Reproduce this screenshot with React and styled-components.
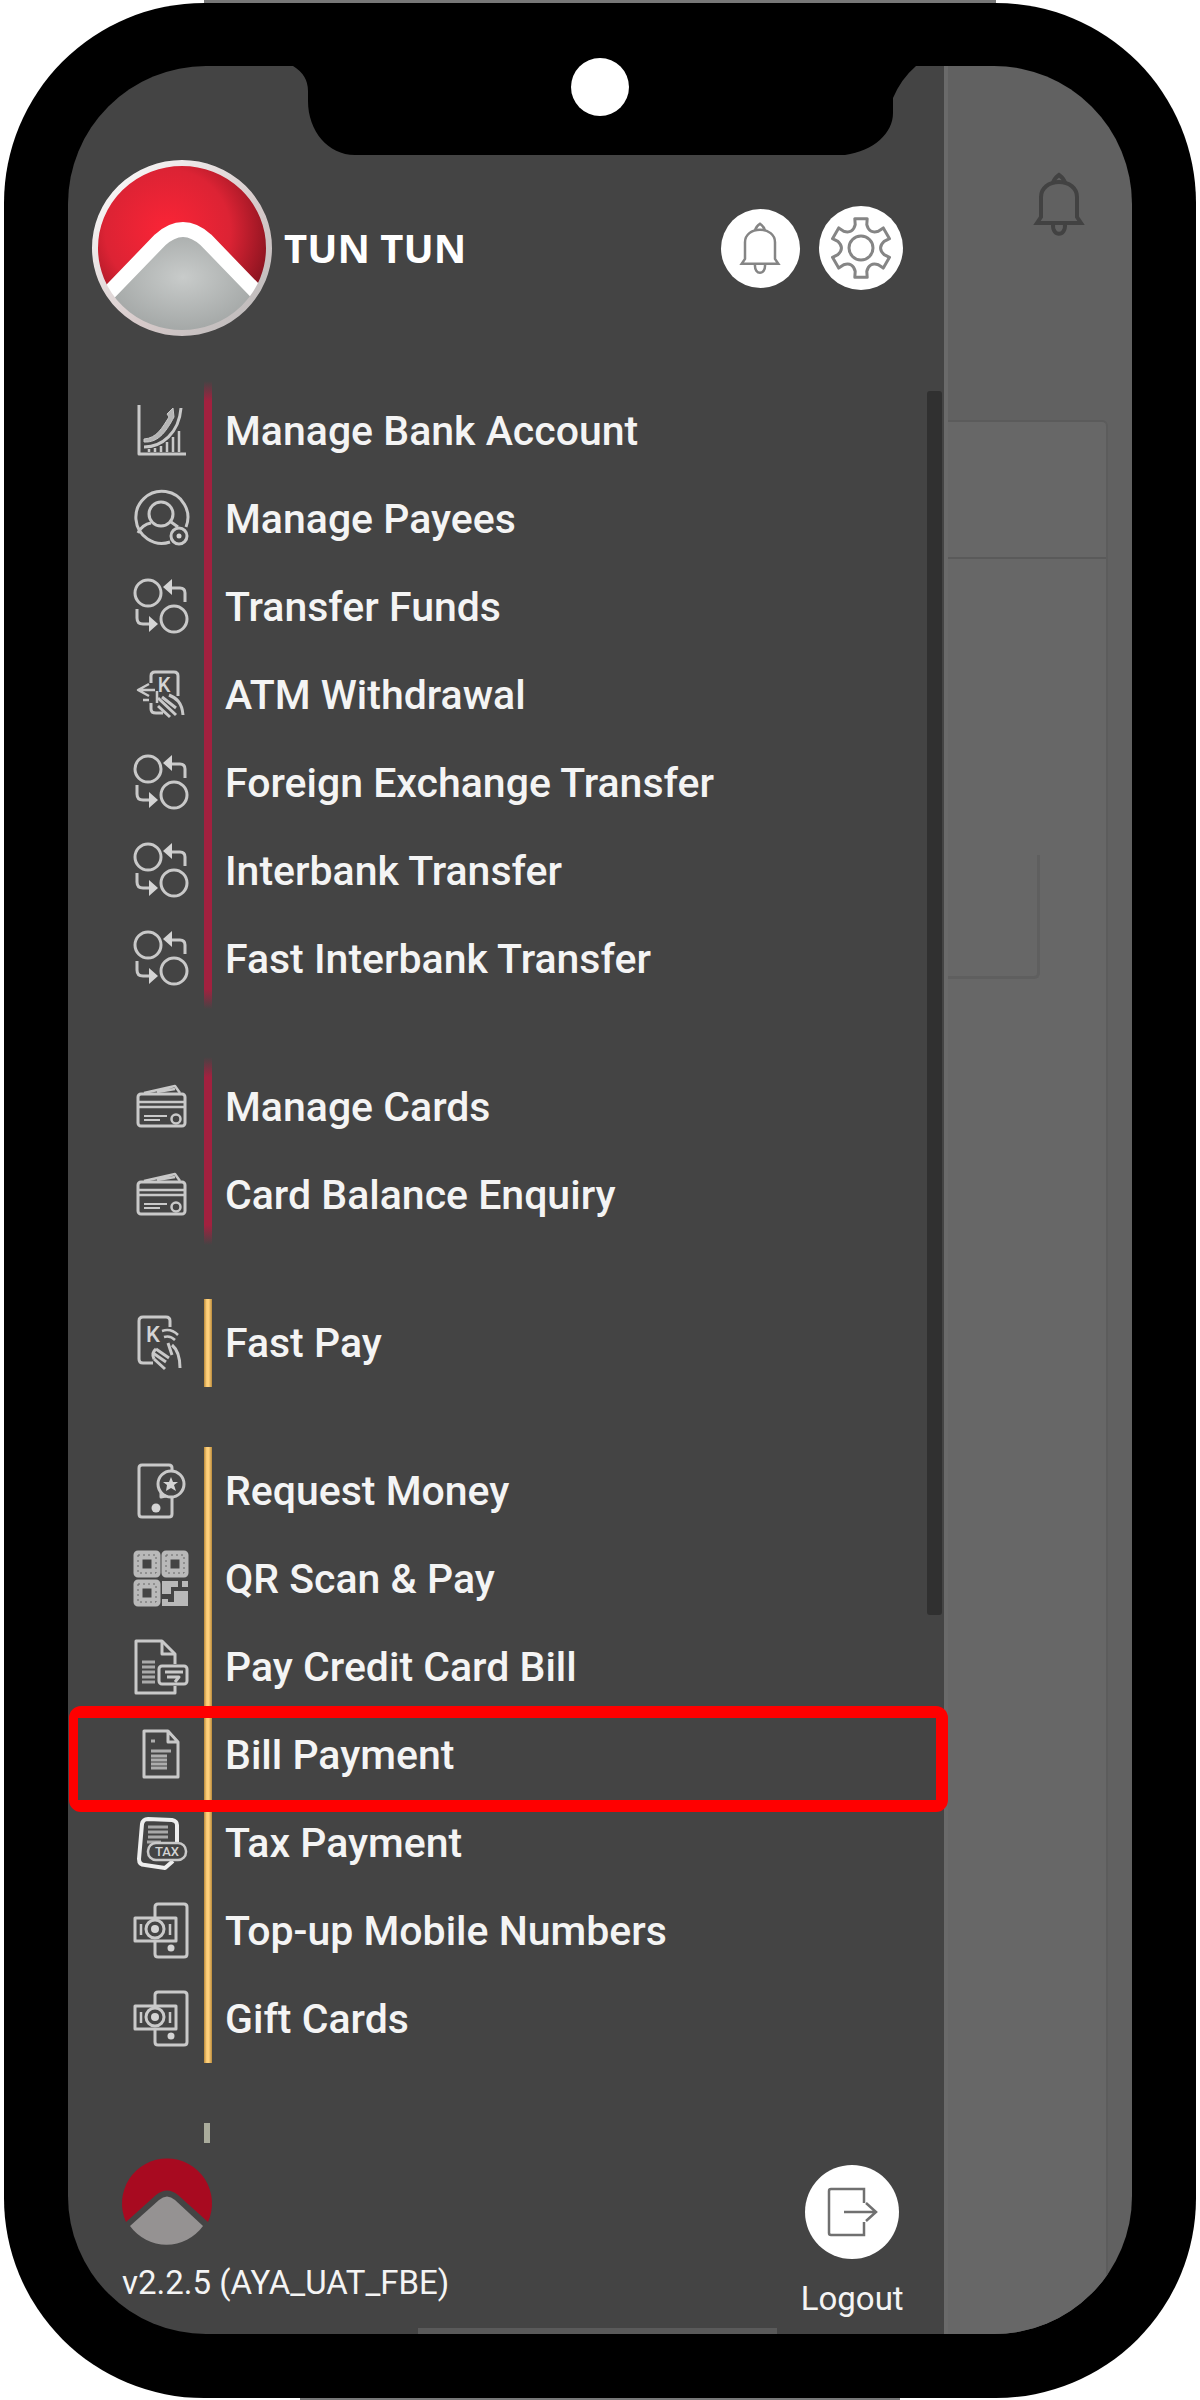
import React from "react";
import styled, { createGlobalStyle, css } from "styled-components";

const GlobalStyle = createGlobalStyle`
  * { box-sizing: border-box; }
  body { margin: 0; background: #fff; }
  button { font: inherit; color: inherit; border: 0; padding: 0; background: none; cursor: pointer; }
  svg { display: block; flex: none; overflow: visible; }
`;

const Stage = styled.div`
  padding: 3px 4px;
  font-family: Roboto, "Liberation Sans", sans-serif;
  color: #f4f4f4;
  background:
    linear-gradient(#777, #777) top / 66% 3px no-repeat,
    linear-gradient(#777, #777) bottom / 50% 3px no-repeat,
    #fff;
`;

const Phone = styled.div`
  position: relative;
  padding: 63px 64px 64px;
  border-radius: 200px;
  background: #000;
`;

const Notch = styled.svg`
  position: absolute;
  top: 52px;
  left: 50%;
  margin-left: -312px;
  z-index: 2;
`;

const Screen = styled.div`
  display: flex;
  border-radius: 138px;
  overflow: hidden;
`;

const Drawer = styled.aside`
  position: relative;
  z-index: 1;
  flex: none;
  width: 82.3%;
  background: #444;
`;

const Header = styled.header`
  display: flex;
  align-items: center;
  padding: 93px 41px 0 24px;
  height: 271px;
`;

const Name = styled.h1`
  margin: 0 auto 0 12px;
  font: 700 40px/56px "Open Sans", "Noto Sans", sans-serif;
  color: #fff;
`;

const RoundButton = styled.button`
  display: grid;
  place-items: center;
  width: ${(p) => p.$size}px;
  height: ${(p) => p.$size}px;
  border-radius: 50%;
  background: #fff;
  color: #858585;
`;

const Actions = styled.div`
  display: flex;
  align-items: center;
  gap: 19px;
`;

const Nav = styled.nav`
  position: relative;
  display: flex;
  flex-direction: column;
  gap: 48px;
  padding-top: 44px;
`;

const ScrollThumb = styled.div`
  position: absolute;
  top: 54px;
  right: 2px;
  width: 15px;
  height: 1224px;
  border-radius: 3px;
  background: #303030;
`;

const bars = {
  red: "linear-gradient(transparent, #a2213f 20px, #a2213f calc(100% - 20px), transparent)",
  gold: "linear-gradient(90deg, #b98a3c, #ffd07a 35%, #ffd07a 60%, #b98a3c)",
  faded: "linear-gradient(#aaac9c, #aaac9c)",
};

const Group = styled.ul`
  list-style: none;
  margin: 0;
  padding: 6px 0;
  min-height: 32px;
  background: ${(p) => bars[p.$bar]} 136px 0 / ${(p) => (p.$bar === "faded" ? 6 : 8)}px 100% no-repeat;
  ${(p) =>
    p.$bar !== "red" &&
    css`
      background-origin: content-box;
      background-clip: content-box;
    `}
`;

const Item = styled.li`
  position: relative;
  ${(p) =>
    p.$marked &&
    css`
      &::after {
        content: "";
        position: absolute;
        inset: -5px -4px -13px 1px;
        border: 12px solid #f00;
        border-left-width: 9px;
        border-radius: 12px;
        pointer-events: none;
      }
    `}
`;

const ItemLink = styled.a`
  display: flex;
  align-items: center;
  gap: 36px;
  height: 88px;
  padding-left: 65px;
  font-size: 41px;
  font-weight: 500;
  line-height: 48px;
  color: inherit;
  text-decoration: none;
`;

const Footer = styled.footer`
  display: flex;
  justify-content: space-between;
  align-items: flex-start;
  padding: 8px 40px 0 54px;
  height: 185px;
  font-size: 33px;
  line-height: 40px;
`;

const Brand = styled.div`
  display: flex;
  flex-direction: column;
  gap: 16px;
`;

const Logout = styled.button`
  display: flex;
  flex-direction: column;
  align-items: center;
  gap: 20px;
  padding-top: 8px;
`;

const LogoutDisc = styled.span`
  display: grid;
  place-items: center;
  width: 94px;
  height: 94px;
  border-radius: 50%;
  background: #fff;
  color: #707070;
`;

const HomeBar = styled.div`
  position: absolute;
  left: 40%;
  right: 19%;
  bottom: 0;
  height: 6px;
  background: #5a5a5a;
`;

const Behind = styled.div`
  flex: 1;
  min-width: 0;
  display: flex;
  flex-direction: column;
  background: #616161;
  border-left: 4px solid #6a6a6a;
`;

const BehindHeader = styled.div`
  display: flex;
  justify-content: flex-end;
  align-items: flex-start;
  height: 354px;
  padding: 107px 49px 0 0;
  color: #424242;
`;

const Sheet = styled.div`
  flex: 1;
  margin-right: 24px;
  border-top: 2px solid #5b5b5b;
  border-right: 2px solid #5c5c5c;
  border-radius: 0 6px 0 0;
  background: #676767;
`;

const SheetTitle = styled.div`
  height: 137px;
  border-bottom: 2px solid #5a5a5a;
`;

const SheetBox = styled.div`
  height: 124px;
  margin: 296px 66px 0 0;
  border: solid #5f5f5f;
  border-width: 0 3px 3px 0;
  border-radius: 0 0 6px 0;
`;

function Bell({ width, height, stroke }) {
  return (
    <svg width={width} height={height} viewBox="0 0 48 62" fill="none" stroke="currentColor" strokeWidth={stroke}>
      <path d="M6 24v20l-4 6h44l-4-6V24C42 15 34 9 24 9S6 15 6 24Z" />
      <path d="M18 10c1-4 3-6 6-8 3 2 5 4 6 8" />
      <path d="M18 51c-1 13 13 13 12 0" />
    </svg>
  );
}

function gearPath() {
  const at = (r, deg) => {
    const a = (deg * Math.PI) / 180;
    return `${(r * Math.sin(a)).toFixed(1)} ${(-r * Math.cos(a)).toFixed(1)}`;
  };
  let d = "";
  for (let a = 0; a < 360; a += 60) {
    d += `${a ? "L" : "M"}${at(30, a - 12)} L${at(30, a + 12)} L${at(24, a + 14)} Q${at(16, a + 30)} ${at(24, a + 46)} `;
  }
  return `${d}Z`;
}

function Gear() {
  return (
    <svg width="64" height="64" viewBox="-32 -32 64 64" fill="none" stroke="currentColor" strokeWidth="3" strokeLinejoin="round">
      <path d={gearPath()} />
      <circle r="12" />
    </svg>
  );
}

function Avatar() {
  return (
    <svg width="180" height="176" viewBox="0 0 180 176">
      <defs>
        <radialGradient id="avRed" cx="0.42" cy="0.4" r="0.58">
          <stop offset="0" stopColor="#fb2436" />
          <stop offset="0.6" stopColor="#dc2334" />
          <stop offset="1" stopColor="#8c1420" />
        </radialGradient>
        <radialGradient id="avGrey" cx="0.5" cy="0.45" r="0.6">
          <stop offset="0" stopColor="#c8cbca" />
          <stop offset="1" stopColor="#9da1a0" />
        </radialGradient>
        <linearGradient id="avRim" x1="0" y1="0" x2="1" y2="1">
          <stop offset="0" stopColor="#fff" />
          <stop offset="0.6" stopColor="#d6c9c9" />
          <stop offset="1" stopColor="#b8b8b8" />
        </linearGradient>
        <clipPath id="avClip">
          <ellipse cx="90" cy="88" rx="87" ry="85" />
        </clipPath>
      </defs>
      <g clipPath="url(#avClip)">
        <rect width="180" height="176" fill="url(#avRed)" />
        <path d="M12 138 L70 78 Q91 60 112 78 L170 138 V176 H12Z" fill="url(#avGrey)" />
        <path d="M8 142 L68 80 Q91 59 114 80 L174 142" fill="none" stroke="#fff" strokeWidth="15" />
      </g>
      <ellipse cx="90" cy="88" rx="87" ry="85" fill="none" stroke="url(#avRim)" strokeWidth="6" />
    </svg>
  );
}

function SmallLogo() {
  return (
    <svg width="90" height="90" viewBox="0 0 90 90">
      <path d="M4 65A45 45 0 1 1 86 65L56 38Q45 29 34 38Z" fill="#a80a20" />
      <path d="M8 69L37 43Q45 36 53 43L81 69A45 45 0 0 1 8 69Z" fill="#959292" />
    </svg>
  );
}

const Icon = ({ children }) => (
  <svg width="56" height="56" viewBox="0 0 56 56" fill="none" stroke="#c9c9c9" strokeWidth="3" strokeLinejoin="round">
    {children}
  </svg>
);

const solid = { fill: "#d4d4d4", stroke: "none" };
const glyph = { fill: "#d4d4d4", stroke: "none", fontFamily: "Roboto, sans-serif", fontWeight: 500, textAnchor: "middle" };

const icons = {
  chart: (
    <Icon>
      <path d="M6 2v49h47" />
      <path d="M11 36c13-1 18-11 25-22l-2-3 6-6 1 9c-7 13-15 26-30 25Z" fill="#b5b5b5" strokeWidth="1" />
      <path d="M11 44C29 44 46 30 48 5" />
      <path d="M28 49v-6M34 49V39M40 49V34M46 49V28M16 49v-3M22 49v-4" strokeWidth="2.5" />
    </Icon>
  ),
  payee: (
    <Icon>
      <path d="M37 51A26 26 0 1 1 53 36" />
      <circle cx="28" cy="23" r="12" />
      <path d="M5 42c3-6 7-9 13-10M38 31l7 5" />
      <circle cx="46" cy="45" r="8" />
      <circle cx="46" cy="45" r="2.5" {...solid} />
    </Icon>
  ),
  transfer: (
    <Icon>
      <circle cx="15" cy="14" r="13" />
      <circle cx="41" cy="40" r="13" />
      <path d="M37 9h10q5 0 5 5v9M4 30v9q0 6 6 6h8" />
      <path d="M30 8l9-8v16ZM25 45l-9-8v16Z" {...solid} />
    </Icon>
  ),
  atm: (
    <Icon>
      <path d="M18 16V9q0-4 4-4h19q4 0 4 4v20M18 36v6q0 4 5 4h7" />
      <text x="31" y="25" fontSize="20" {...glyph}>K</text>
      <path d="M16 17L5 23l11 6M6 23h16M16 33h-6M24 24v12" strokeWidth="2.5" />
      <path d="M25 31l18 17M29 30l14 11M36 28c7 3 13 7 14 20M25 39l12 11" strokeWidth="3" />
    </Icon>
  ),
  card: (
    <Icon>
      <rect x="5" y="15" width="47" height="32" rx="3" />
      <path d="M5 23h47M5 28h47" strokeWidth="2.5" />
      <path d="M11 14l31-7 5 7M24 13l18-3" strokeWidth="2.5" />
      <path d="M11 37h23M11 41h16" strokeWidth="2" />
      <circle cx="43" cy="40" r="4.5" strokeWidth="2.5" />
    </Icon>
  ),
  fastPay: (
    <Icon>
      <path d="M37 12V6q0-4-4-4H10Q6 2 6 6v38q0 4 4 4h10" />
      <text x="20" y="27" fontSize="22" {...glyph}>K</text>
      <path d="M29 16q9-3 16 4M31 22q6-2 11 3" strokeWidth="2.5" />
      <path d="M35 28l4 12M39 30c6 5 8 12 8 23M23 34l13 9M20 38l13 9M21 44l11 10" strokeWidth="3" />
      <path d="M23 34q-5 4-2 10" />
    </Icon>
  ),
  request: (
    <Icon>
      <path d="M39 8V5q0-3-3-3H9Q6 2 6 5v46q0 3 3 3h27q3 0 3-3V34" />
      <circle cx="38" cy="21" r="13" />
      <path d="M28 29v5l5-1" />
      <circle cx="23" cy="45" r="4.5" {...solid} />
      <path d="M38 14l2 5h5l-4 3 2 6-5-3-5 3 1-6-4-3h6Z" {...solid} />
    </Icon>
  ),
  qr: (
    <Icon>
      <g stroke="#b9b9b9" strokeWidth="9">
        <rect x="5" y="4" width="18" height="18" />
        <rect x="33" y="4" width="18" height="18" />
        <rect x="5" y="33" width="18" height="18" />
      </g>
      <g stroke="#666" strokeWidth="1" strokeDasharray="2 3">
        <rect x="5" y="4" width="18" height="18" />
        <rect x="33" y="4" width="18" height="18" />
        <rect x="5" y="33" width="18" height="18" />
      </g>
      <path d="M29 30h16v6h-7v7h-9ZM49 30h6v6h-6ZM41 40h14v15H29v-7h6v3h6Z" fill="#b9b9b9" stroke="none" />
    </Icon>
  ),
  creditBill: (
    <Icon>
      <path d="M42 25V15L29 2H3v52h39v-7" />
      <path d="M29 2v13h13" />
      <path d="M9 23h13M9 28h13M9 33h13M9 38h13M9 43h13" strokeWidth="3" stroke="#aaa" />
      <rect x="26" y="27" width="28" height="18" rx="3" />
      <path d="M32 33h18M34 38h12l-4 5" strokeWidth="3" />
    </Icon>
  ),
  bill: (
    <Icon>
      <path d="M11 4h24l10 11v35H11ZM35 4v11h10" />
      <path d="M18 14h4M18 24h20M18 29h16M18 33h16M18 37h16M18 41h16" strokeWidth="3" stroke="#adadad" />
    </Icon>
  ),
  tax: (
    <Icon>
      <path d="M44 27V10q0-4-5-5L15 4q-5 0-6 5L6 44q0 6 6 6l20 3 8-7" stroke="#eee" strokeWidth="4" />
      <path d="M15 12h20M15 17h20M15 22h20M14 27h14" strokeWidth="3" stroke="#a8a8a8" />
      <rect x="15" y="28" width="38" height="17" rx="8" fill="#444" strokeWidth="2.5" />
      <text x="34" y="41" fontSize="13" {...glyph}>TAX</text>
    </Icon>
  ),
  topup: (
    <Icon>
      <path d="M22 14V4q0-3 3-3h26q3 0 3 3v47q0 3-3 3H25q-3 0-3-3V39" />
      <rect x="2" y="15" width="41" height="23" />
      <path d="M8 21v11M37 21v11" strokeWidth="2.5" />
      <circle cx="22" cy="26" r="9" />
      <circle cx="22" cy="26" r="4" {...solid} />
      <circle cx="38" cy="45" r="3.5" {...solid} />
    </Icon>
  ),
};

const groups = [
  {
    bar: "red",
    items: [
      ["chart", "Manage Bank Account"],
      ["payee", "Manage Payees"],
      ["transfer", "Transfer Funds"],
      ["atm", "ATM Withdrawal"],
      ["transfer", "Foreign Exchange Transfer"],
      ["transfer", "Interbank Transfer"],
      ["transfer", "Fast Interbank Transfer"],
    ],
  },
  {
    bar: "red",
    items: [
      ["card", "Manage Cards"],
      ["card", "Card Balance Enquiry"],
    ],
  },
  { bar: "gold", items: [["fastPay", "Fast Pay"]] },
  {
    bar: "gold",
    items: [
      ["request", "Request Money"],
      ["qr", "QR Scan & Pay"],
      ["creditBill", "Pay Credit Card Bill"],
      ["bill", "Bill Payment", true],
      ["tax", "Tax Payment"],
      ["topup", "Top-up Mobile Numbers"],
      ["topup", "Gift Cards"],
    ],
  },
  { bar: "faded", items: [] },
];

export default function App() {
  return (
    <Stage>
      <GlobalStyle />
      <Phone>
        <Notch width="624" height="102" viewBox="0 0 624 102" aria-hidden="true">
          <path
            d="M0 0V11H5Q20 20 20 36V46C20 76 40 100 67 100H557C586 96 605 78 605 58V43Q613 24 628 11V0Z"
            fill="#000"
          />
          <circle cx="312" cy="32" r="29" fill="#fff" />
        </Notch>
        <Screen>
          <Drawer>
            <Header>
              <Avatar />
              <Name>TUN TUN</Name>
              <Actions>
                <RoundButton $size={79} aria-label="Notifications">
                  <Bell width={40} height={52} stroke={3} />
                </RoundButton>
                <RoundButton $size={84} aria-label="Settings">
                  <Gear />
                </RoundButton>
              </Actions>
            </Header>
            <Nav>
              <ScrollThumb />
              {groups.map((group, i) => (
                <Group key={i} $bar={group.bar}>
                  {group.items.map(([icon, label, marked]) => (
                    <Item key={label} $marked={marked}>
                      <ItemLink href="#">
                        {icons[icon]}
                        {label}
                      </ItemLink>
                    </Item>
                  ))}
                </Group>
              ))}
            </Nav>
            <Footer>
              <Brand>
                <SmallLogo />
                v2.2.5 (AYA_UAT_FBE)
              </Brand>
              <Logout>
                <LogoutDisc>
                  <svg width="50" height="50" viewBox="0 0 50 50" fill="none" stroke="currentColor" strokeWidth="2.5">
                    <path d="M37 16V2H4Q2 2 2 4v42q0 2 2 2h33V35" />
                    <path d="M17 25h31M39 16l10 9-10 9" />
                  </svg>
                </LogoutDisc>
                Logout
              </Logout>
            </Footer>
            <HomeBar />
          </Drawer>
          <Behind>
            <BehindHeader>
              <Bell width={48} height={62} stroke={4} />
            </BehindHeader>
            <Sheet>
              <SheetTitle />
              <SheetBox />
            </Sheet>
          </Behind>
        </Screen>
      </Phone>
    </Stage>
  );
}
